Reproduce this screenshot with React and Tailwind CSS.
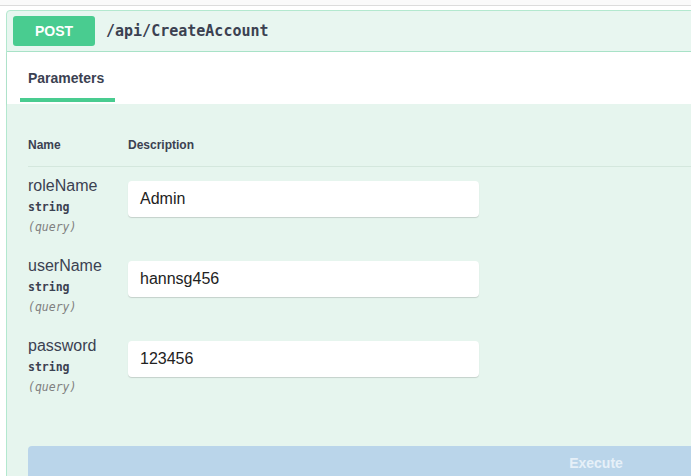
export default function App() {
  const params = [
    { name: "roleName", value: "Admin" },
    { name: "userName", value: "hannsg456" },
    { name: "password", value: "123456" },
  ];

  return (
    <div className="w-[691px] h-[476px] overflow-hidden bg-white font-['Liberation_Sans',Arial,sans-serif]">
      {/* top strip */}
      <div className="h-[6px] bg-[#fafafa] border-b border-[#dcdcdc]" />

      {/* opblock */}
      <div className="ml-[6px] mt-[4px] w-[720px] rounded-tl-[4px] border border-[#b3e8cf] bg-[#e8f6f0]">
        {/* summary */}
        <div className="flex items-center h-[41px] px-[6px] border-b border-[#a9e3c8]">
          <div className="w-[82px] h-[30px] rounded-[3px] bg-[#49cc90] flex items-center justify-center text-white text-[14px] font-bold">
            POST
          </div>
          <span className="ml-[11px] font-['DejaVu_Sans_Mono',monospace] font-bold text-[15px] text-[#3b4151]">
            /api/CreateAccount
          </span>
        </div>

        {/* tab header */}
        <div className="h-[52px] bg-white px-[13px] flex items-end shadow-[0_1px_2px_rgba(0,0,0,0.08)]">
          <div className="h-full flex flex-col justify-end">
            <div className="px-[8px] pb-[9px] text-[14px] font-bold text-[#3b4151]">
              Parameters
            </div>
            <div className="h-[4px] w-[95px] bg-[#49cc90] mb-[2px]" />
          </div>
        </div>

        {/* parameters table */}
        <div className="bg-[#e6f5ee] px-[21px] pt-[33px] pb-[40px]">
          <div className="flex text-[12px] font-bold text-[#3b4151] leading-[16px] pb-[13px] border-b border-[#d4e7dd]">
            <div className="w-[100px]">Name</div>
            <div>Description</div>
          </div>

          {params.map((p) => (
            <div key={p.name} className="flex h-[80px] pt-[9px]">
              <div className="w-[100px]">
                <div className="text-[16px] leading-[20px] text-[#3b4151]">{p.name}</div>
                <div className="mt-[2px] font-['DejaVu_Sans_Mono',monospace] text-[11.5px] font-bold leading-[18px] text-[#3b4151]">
                  string
                </div>
                <div className="mt-[2px] font-['DejaVu_Sans_Mono',monospace] text-[11.5px] italic leading-[18px] text-[#808080]">
                  (query)
                </div>
              </div>
              <div className="mt-[5px] w-[351px] h-[36px] rounded-[4px] bg-white shadow-[0_1px_1px_rgba(0,0,0,0.15)] flex items-center px-[12px] text-[16px] text-[#222]">
                {p.value}
              </div>
            </div>
          ))}

          <div className="mt-[39px] w-[1136px] h-[34px] rounded-[4px] bg-[#bad5ea] flex items-center justify-center text-[14px] font-bold text-[#e6f0f8]">
            Execute
          </div>
        </div>
      </div>
    </div>
  );
}
